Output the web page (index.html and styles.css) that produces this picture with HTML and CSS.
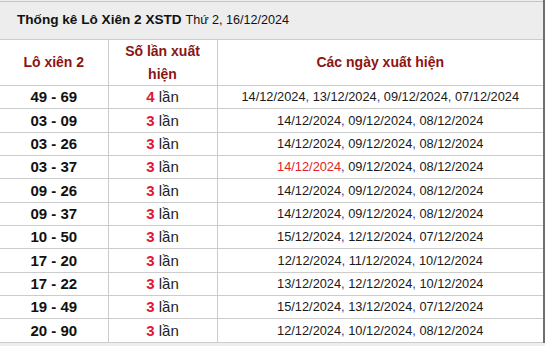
FILE: index.html
```html
<!DOCTYPE html>
<html lang="vi">
<head>
<meta charset="utf-8">
<link rel="stylesheet" href="styles.css">
</head>
<body>
<div class="wrap">
  <div class="title"><b>Thống kê Lô Xiên 2 XSTD</b> <span class="sub">Thứ 2, 16/12/2024</span></div>
  <table class="stats">
    <colgroup><col class="c1"><col class="c2"><col class="c3"></colgroup>
    <thead>
      <tr><th>Lô xiên 2</th><th>Số lần xuất hiện</th><th>Các ngày xuất hiện</th></tr>
    </thead>
    <tbody>
      <tr><td class="pair">49 - 69</td><td class="cnt"><b>4</b> lần</td><td class="dates">14/12/2024<i>,</i> 13/12/2024<i>,</i> 09/12/2024<i>,</i> 07/12/2024</td></tr>
      <tr><td class="pair">03 - 09</td><td class="cnt"><b>3</b> lần</td><td class="dates">14/12/2024<i>,</i> 09/12/2024<i>,</i> 08/12/2024</td></tr>
      <tr><td class="pair">03 - 26</td><td class="cnt"><b>3</b> lần</td><td class="dates">14/12/2024<i>,</i> 09/12/2024<i>,</i> 08/12/2024</td></tr>
      <tr><td class="pair">03 - 37</td><td class="cnt"><b>3</b> lần</td><td class="dates"><span class="hot">14/12/2024</span><i>,</i> 09/12/2024<i>,</i> 08/12/2024</td></tr>
      <tr><td class="pair">09 - 26</td><td class="cnt"><b>3</b> lần</td><td class="dates">14/12/2024<i>,</i> 09/12/2024<i>,</i> 08/12/2024</td></tr>
      <tr><td class="pair">09 - 37</td><td class="cnt"><b>3</b> lần</td><td class="dates">14/12/2024<i>,</i> 09/12/2024<i>,</i> 08/12/2024</td></tr>
      <tr><td class="pair">10 - 50</td><td class="cnt"><b>3</b> lần</td><td class="dates">15/12/2024<i>,</i> 12/12/2024<i>,</i> 07/12/2024</td></tr>
      <tr><td class="pair">17 - 20</td><td class="cnt"><b>3</b> lần</td><td class="dates">12/12/2024<i>,</i> 11/12/2024<i>,</i> 10/12/2024</td></tr>
      <tr><td class="pair">17 - 22</td><td class="cnt"><b>3</b> lần</td><td class="dates">13/12/2024<i>,</i> 12/12/2024<i>,</i> 10/12/2024</td></tr>
      <tr><td class="pair">19 - 49</td><td class="cnt"><b>3</b> lần</td><td class="dates">15/12/2024<i>,</i> 13/12/2024<i>,</i> 07/12/2024</td></tr>
      <tr><td class="pair">20 - 90</td><td class="cnt"><b>3</b> lần</td><td class="dates">12/12/2024<i>,</i> 10/12/2024<i>,</i> 08/12/2024</td></tr>
    </tbody>
  </table>
</div>
</body>
</html>
```

FILE: styles.css
```css
html, body {
  margin: 0;
  padding: 0;
}
body {
  background: #eeeeee;
  font-family: "Liberation Sans", Arial, sans-serif;
  color: #111;
  width: 545px;
  height: 346px;
  overflow: hidden;
}
.wrap {
  width: 543px;
  border-right: 2px solid #6e6e6e;
  background: #fff;
  padding-top: 1px;
  background-clip: content-box;
}
.title {
  border-top: 1px solid #c4c4c4;
  background: #eeeded;
  height: 37px;
  line-height: 36px;
  padding-left: 17px;
  font-size: 13.6px;
  color: #111;
}
.title b {
  font-weight: bold;
}
.title .sub {
  font-size: 12.6px;
}
.stats {
  width: 543px;
  border-collapse: collapse;
  table-layout: fixed;
  background: #fff;
}
.c1 { width: 108px; }
.c2 { width: 109px; }
.c3 { width: 326px; }
.stats th,
.stats td {
  border: 1px solid #cccccc;
  text-align: center;
  padding: 0 6px;
}
.stats tr > :first-child { border-left: none; }
.stats tr > :last-child { border-right: none; }
.stats th {
  color: #8b1414;
  font-size: 14px;
  font-weight: bold;
  line-height: 22.5px;
  height: 45px;
  padding-top: 0;
  padding-bottom: 0;
}
.stats td {
  height: 22.35px;
  line-height: 20px;
}
.pair {
  font-weight: bold;
  font-size: 15px;
  color: #111;
}
.cnt {
  font-size: 15px;
  color: #222;
}
.cnt b {
  color: #e3162f;
  font-weight: bold;
}
.dates {
  font-size: 12.8px;
  color: #1a1a1a;
}
.dates i {
  font-style: normal;
  color: #3b3ba0;
}
.hot {
  color: #e02424;
}
```
